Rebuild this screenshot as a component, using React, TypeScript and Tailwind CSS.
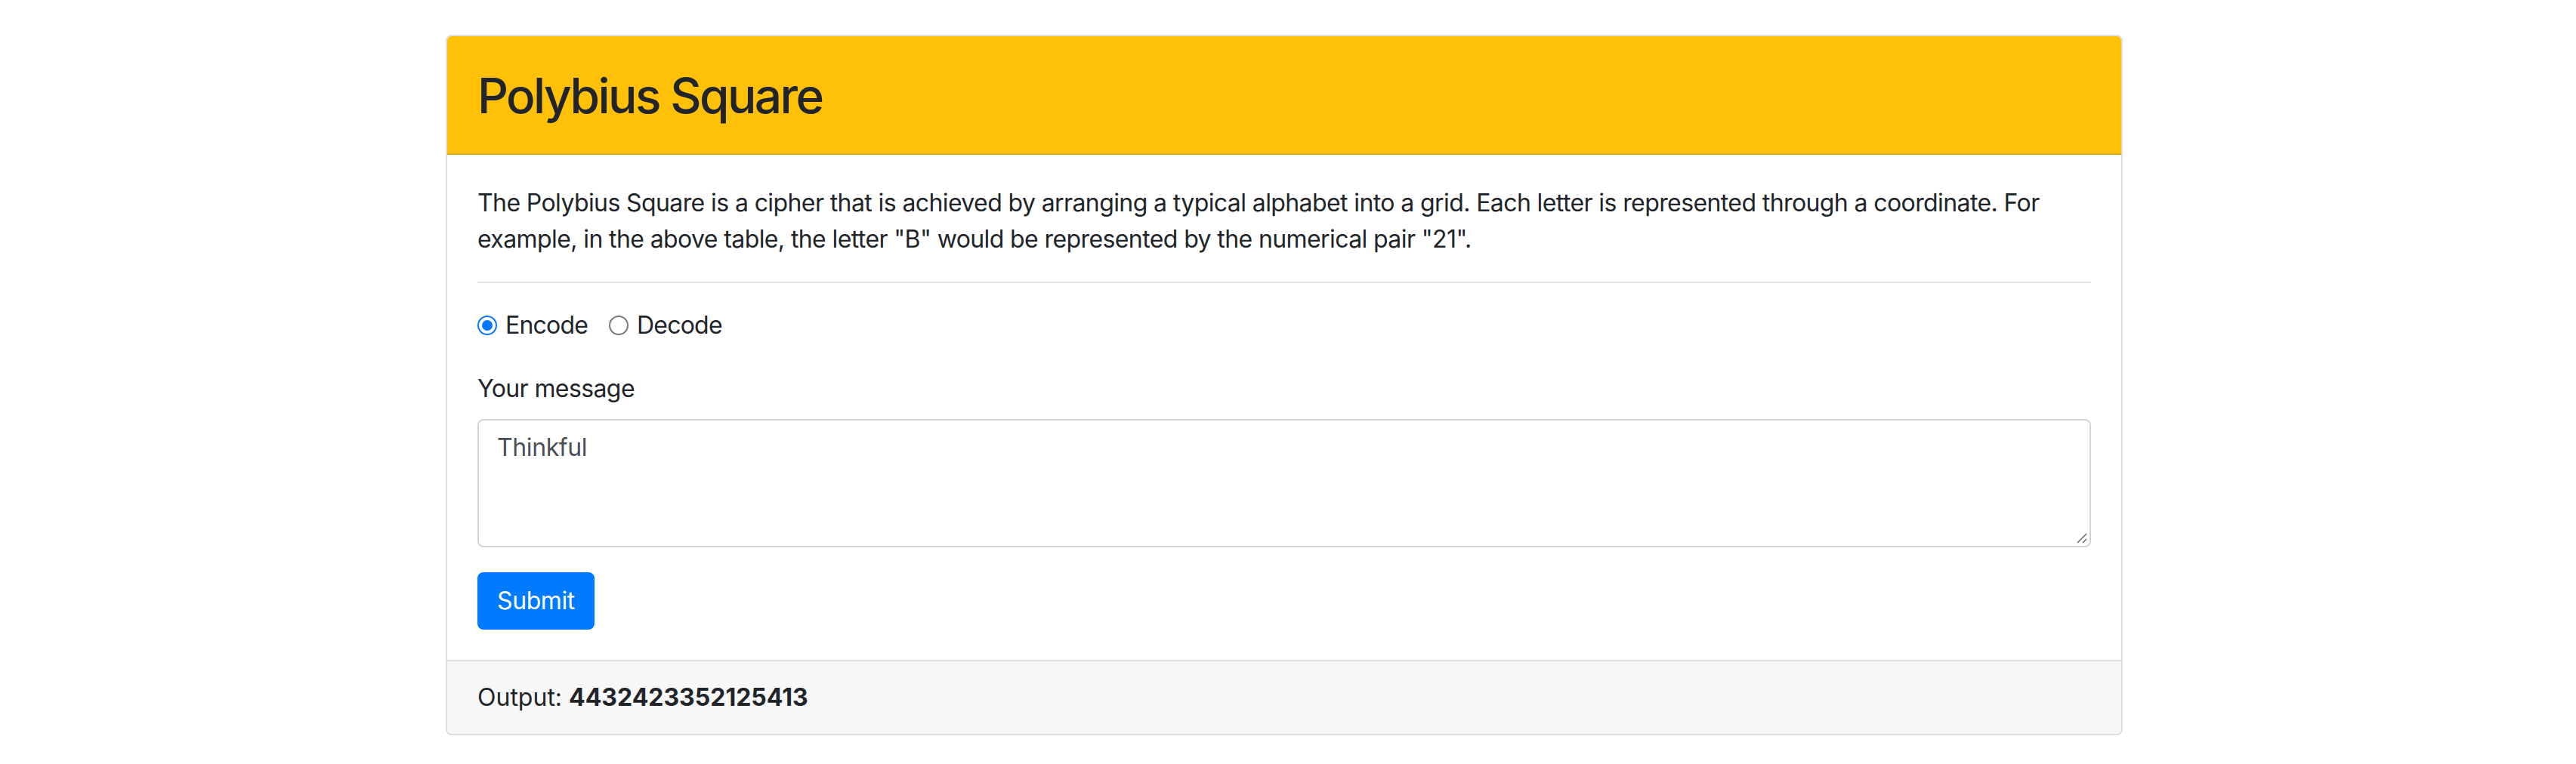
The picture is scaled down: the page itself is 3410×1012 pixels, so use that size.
import React from "react";

const font = { fontFamily: "Inter, 'Noto Sans', 'Liberation Sans', sans-serif" };

function Radio({ checked, label }: { checked: boolean; label: string }) {
  return (
    <label className="inline-flex items-center mr-[28px]">
      {checked ? (
        <span className="w-[26px] h-[26px] rounded-full border-[2px] border-[#0a77ff] bg-white flex items-center justify-center mr-[11px]">
          <span className="w-[14px] h-[14px] rounded-full bg-[#0a77ff]" />
        </span>
      ) : (
        <span className="w-[26px] h-[26px] rounded-full border-[2px] border-[#7a7a7a] bg-white mr-[11px]" />
      )}
      <span className="tracking-[-0.8px]">{label}</span>
    </label>
  );
}

export default function App() {
  return (
    <div className="bg-white min-h-[1012px] pt-[46px] pl-[590px] text-[#212529] text-[32px] leading-[48px]" style={font}>
      <div className="w-[2220px] border-[2px] border-[#dfdfdf] rounded-[8px] overflow-hidden bg-white">
        <div className="bg-[#ffc107] border-b-[2px] border-[#dfa906] pt-[40px] pb-[38px] px-[40px]">
          <h2 className="text-[64px] leading-[77px] font-medium m-0 text-[#212529] tracking-[-2.6px]">Polybius Square</h2>
        </div>
        <div className="pt-[40px] pb-[40px] px-[40px]">
          <p className="mb-[32px] tracking-[-0.6px]">
            The Polybius Square is a cipher that is achieved by arranging a typical alphabet into a grid. Each letter is represented through a coordinate. For example, in the above table, the letter "B" would be represented by the numerical pair "21".
          </p>
          <div className="h-[2px] bg-[#e6e6e6] mb-[32px]" />
          <div className="flex items-center h-[48px] mb-[36px]">
            <Radio checked label="Encode" />
            <Radio checked={false} label="Decode" />
          </div>
          <div className="mb-[16px] tracking-[-0.6px]">Your message</div>
          <div className="relative mb-[33px]">
            <textarea
              className="block w-full h-[170px] border-[2px] border-[#ced4da] rounded-[8px] px-[24px] py-[12px] text-[#495057] text-[32px] leading-[48px] resize-none outline-none tracking-[-0.4px]"
              style={font}
              defaultValue="Thinkful"
            />
            <svg className="absolute right-[4px] bottom-[4px]" width="16" height="16" viewBox="0 0 16 16">
              <line x1="2" y1="14" x2="14" y2="2" stroke="#6b6b6b" strokeWidth="1.6" />
              <line x1="9" y1="14" x2="14" y2="9" stroke="#6b6b6b" strokeWidth="1.6" />
            </svg>
          </div>
          <button className="bg-[#007bff] text-white text-[32px] leading-[48px] px-[24px] py-[12px] border-[2px] border-[#007bff] rounded-[8px] tracking-[-0.4px]" style={font}>
            Submit
          </button>
        </div>
        <div className="bg-[#f7f7f7] border-t-[2px] border-[#dfdfdf] py-[24px] px-[40px]">
          Output: <span className="font-bold">4432423352125413</span>
        </div>
      </div>
    </div>
  );
}
